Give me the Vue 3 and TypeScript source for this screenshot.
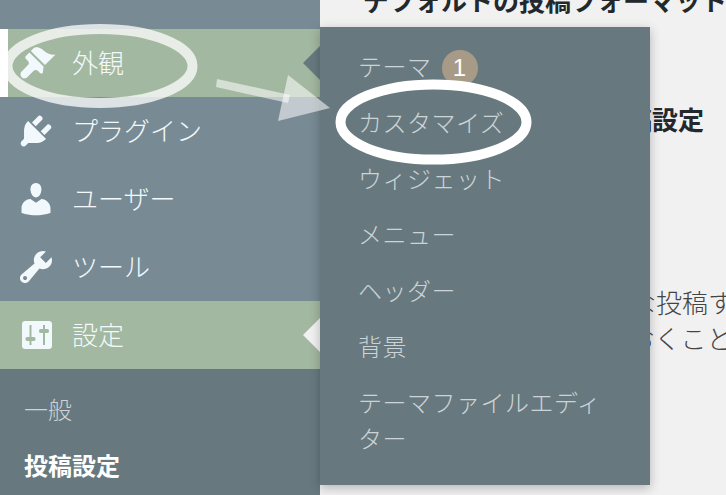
<script setup lang="ts">
interface MenuItem {
  label: string
  icon: string
  state?: 'open' | 'current'
}

const menu: MenuItem[] = [
  {
    label: '外観',
    state: 'open',
    icon: 'M14.48 11.06L7.41 3.99l1.5-1.5c.5-.56 2.3-.47 3.51.32 1.21.8 1.43 1.28 2.91 2.1 1.18.64 2.45 1.26 4.45.85zm-.71.71L6.7 4.7 4.93 6.47c-.39.39-.39 1.02 0 1.41l1.06 1.06c.59.59.59 1.54 0 2.12l-3.18 3.18c-.78.78-.78 2.05 0 2.83.78.78 2.05.78 2.83 0l3.18-3.18c.58-.59 1.53-.59 2.12 0l1.06 1.06c.39.39 1.02.39 1.41 0z'
  },
  {
    label: 'プラグイン',
    icon: 'M13.11 4.36L9.87 7.6 8 5.73l3.24-3.24c.35-.34 1.05-.2 1.56.32.52.51.66 1.21.31 1.55zm-8 1.77l.91-1.12 9.01 9.01-1.19.84c-.71.71-2.63 1.16-3.82 1.16H6.14L4.9 17.26c-.59.59-1.54.59-2.12 0-.59-.58-.59-1.53 0-2.12l1.24-1.24v-3.88c0-1.13.4-3.19 1.09-3.89zm7.26 3.97l3.24-3.24c.34-.35 1.04-.21 1.55.31.52.51.66 1.21.31 1.55l-3.24 3.25z'
  },
  {
    label: 'ユーザー',
    icon: 'M10 9.25c-2.27 0-2.73-3.44-2.73-3.44C7 4.02 7.82 2 9.97 2c2.16 0 2.98 2.02 2.71 3.81 0 0-.41 3.44-2.68 3.44zm0 2.57L12.72 10c2.39 0 4.52 2.33 4.52 4.53v2.49s-3.65 1.13-7.24 1.13c-3.65 0-7.24-1.13-7.24-1.13v-2.49c0-2.25 1.94-4.48 4.47-4.48z'
  },
  {
    label: 'ツール',
    icon: 'M16.68 9.77c-1.34 1.34-3.3 1.67-4.95.99l-5.41 6.52c-.99.99-2.59.99-3.58 0s-.99-2.59 0-3.57l6.52-5.42c-.68-1.65-.35-3.61.99-4.95 1.28-1.28 3.12-1.62 4.72-1.06l-2.89 2.89 2.82 2.82 2.86-2.87c.53 1.58.18 3.39-1.08 4.65zM3.81 16.21c.4.39 1.04.39 1.43 0 .4-.4.4-1.04 0-1.43-.39-.4-1.03-.4-1.43 0-.39.39-.39 1.03 0 1.43z'
  },
  {
    label: '設定',
    state: 'current',
    icon: 'M18 15.5v-11c0-.9-.7-1.5-1.5-1.5h-12C3.7 3 3 3.6 3 4.5v11c0 .9.7 1.5 1.5 1.5h12c.8 0 1.5-.6 1.5-1.5zM6.75 5h1v6H9c.5 0 .75.45.75 1s-.25 1-.75 1H7.75v2h-1v-2H5.5c-.5 0-.75-.45-.75-1s.25-1 .75-1h1.25zM13.5 5h1v2h1.25c.5 0 .75.45.75 1s-.25 1-.75 1H14.5v6h-1V9h-1.25c-.5 0-.75-.45-.75-1s.25-1 .75-1h1.25z'
  }
]

const flyout: string[] = ['カスタマイズ', 'ウィジェット', 'メニュー', 'ヘッダー', '背景', 'テーマファイルエディター']
</script>

<template>
  <div class="page">
    <aside class="sidebar">
      <div class="menu-top"></div>
      <div
        v-for="item in menu"
        :key="item.label"
        class="menu-item"
        :class="item.state"
      >
        <svg class="menu-icon" viewBox="0 0 20 20" aria-hidden="true">
          <path :d="item.icon" fill-rule="evenodd" />
        </svg>
        <span class="menu-label">{{ item.label }}</span>
      </div>
      <nav class="current-sub">
        <a class="current-link">一般</a>
        <a class="current-link strong">投稿設定</a>
      </nav>
    </aside>

    <main class="content">
      <h2 class="heading">デフォルトの投稿フォーマット</h2>
      <h2 class="section">メールを使った記事投稿設定</h2>
      <p class="para">メールでの記事を手軽な投稿する方法</p>
      <p class="para second">秘密のアドレスにしておくことをお勧めします</p>
    </main>

    <nav class="flyout">
      <a class="fly-link">テーマ<span class="badge">1</span></a>
      <a v-for="link in flyout" :key="link" class="fly-link">{{ link }}</a>
    </nav>

    <svg class="marks" viewBox="0 0 726 495" aria-hidden="true">
      <ellipse cx="100" cy="66" rx="92.5" ry="37" class="ring soft" />
      <path d="M217 79 L290 95 L288 103 L216 87 Z" class="arrow" />
      <path d="M288 75 L330 108 L278 121 Z" class="arrow" />
      <ellipse cx="433.5" cy="122" rx="93" ry="37.5" class="ring" />
    </svg>
  </div>
</template>

<style>
html,
body {
  margin: 0;
  background: #f1f1f1;
}
</style>

<style scoped>
.page {
  position: relative;
  display: flex;
  width: 726px;
  height: 495px;
  overflow: hidden;
  background: #f1f1f1;
  font-family: "Noto Sans CJK JP", "Noto Sans", sans-serif;
  font-weight: 300;
}

.sidebar {
  flex: 0 0 320px;
  display: flex;
  flex-direction: column;
  background: #788b95;
  color: #f2f8fb;
}

.menu-top {
  height: 29px;
}

.menu-item {
  position: relative;
  display: flex;
  align-items: center;
  gap: 16px;
  box-sizing: border-box;
  height: 68px;
  padding-left: 16px;
  font-size: 26px;
}

.menu-label {
  padding-bottom: 4px;
}

.menu-icon {
  flex: 0 0 40px;
  width: 40px;
  height: 40px;
  fill: #f2f9fd;
}

.menu-item.open,
.menu-item.current {
  background: #a3b8a0;
}

.menu-item.open {
  box-shadow: inset 8px 0 0 #fff;
}

.menu-item.open::after,
.menu-item.current::after {
  content: "";
  position: absolute;
  right: 0;
  top: 17px;
  border: 17px solid transparent;
  border-left: 0;
  border-right-color: #67797f;
}

.menu-item.current::after {
  border-right-color: #f1f1f1;
}

.current-sub {
  flex: 1;
  display: flex;
  flex-direction: column;
  padding-top: 12px;
  background: #67797f;
}

.current-link {
  padding: 10px 24px;
  font-size: 24px;
  line-height: 36px;
  color: #cdd4d7;
}

.current-link.strong {
  color: #fff;
  font-weight: 700;
}

.content {
  flex: 1;
  min-width: 0;
  padding-left: 43px;
  color: #33393c;
  white-space: nowrap;
}

.heading {
  margin: -18px 0 0;
  font-size: 26px;
  line-height: 36px;
  font-weight: 700;
  color: #23282d;
}

.section {
  margin: 83px 0 0 3px;
  font-size: 26px;
  line-height: 36px;
  font-weight: 700;
  color: #23282d;
}

.para {
  margin: 147px 0 0 7px;
  font-size: 26px;
  line-height: 36px;
  font-weight: 300;
  color: #444;
}

.para.second {
  margin-top: 0;
}

.flyout {
  position: absolute;
  left: 320px;
  top: 27px;
  display: flex;
  flex-direction: column;
  box-sizing: border-box;
  width: 330px;
  height: 458px;
  padding: 11px 38px 17px;
  background: #67797f;
  box-shadow: 0 3px 10px rgba(0, 0, 0, 0.25);
}

.fly-link {
  display: flex;
  align-items: center;
  padding: 10px 0;
  font-size: 24px;
  line-height: 36px;
  letter-spacing: 0.5px;
  color: #cdd4d7;
}

.fly-link:last-child {
  display: block;
}

.badge {
  display: inline-flex;
  align-items: center;
  justify-content: center;
  width: 36px;
  height: 36px;
  margin-left: 10px;
  margin-top: 2px;
  margin-bottom: -2px;
  border-radius: 50%;
  background: #a79b87;
  color: #fff;
  font-family: "Liberation Sans", sans-serif;
  font-weight: 400;
  font-size: 24px;
  line-height: 1;
  letter-spacing: 0;
}

.marks {
  position: absolute;
  inset: 0;
  width: 726px;
  height: 495px;
  pointer-events: none;
}

.ring {
  fill: none;
  stroke: #fff;
  stroke-width: 10;
}

.ring.soft {
  stroke-opacity: 0.75;
}

.arrow {
  fill: #fff;
  fill-opacity: 0.55;
}
</style>
